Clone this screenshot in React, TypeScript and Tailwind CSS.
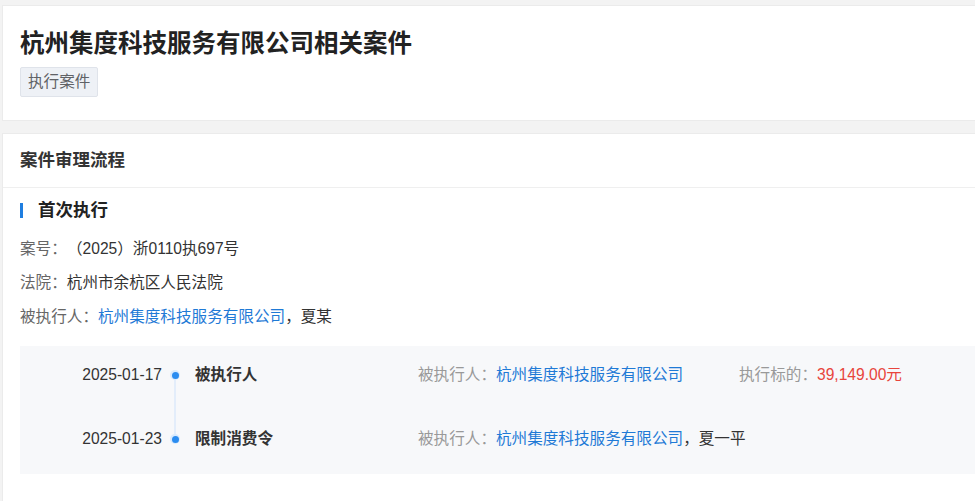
const font = "font-['Liberation_Sans','Noto_Sans_CJK_SC',sans-serif]";

const events = [
    {
        date: "2025-01-17",
        title: "被执行人",
        party: "杭州集度科技服务有限公司",
        extra: "",
        amount: "39,149.00元",
    },
    {
        date: "2025-01-23",
        title: "限制消费令",
        party: "杭州集度科技服务有限公司",
        extra: "，夏一平",
        amount: "",
    },
];

export default function App() {
    return (
        <div className={`${font} flex h-[501px] w-[975px] flex-col overflow-hidden bg-[#f3f3f3] pl-[2px] pt-[5px]`}>
            {/* Title card */}
            <div className="border border-r-0 border-[#ebebeb] bg-white pl-[17px] pt-[22px] pb-[23px]">
                <h1 className="text-[24.5px] font-bold leading-[32px] text-[#222]">
                    杭州集度科技服务有限公司相关案件
                </h1>
                <span className="mt-[7px] inline-flex h-[30px] items-center rounded-[2px] border border-[#dfe3ea] bg-[#eef1f6] px-[7px] text-[15.6px] text-[#606266]">
                    执行案件
                </span>
            </div>

            {/* Process card */}
            <div className="mt-[12px] flex-1 border border-r-0 border-b-0 border-[#ebebeb] bg-white">
                <div className="flex h-[54px] items-center border-b border-[#efefef] pl-[17px]">
                    <h2 className="text-[17.5px] font-bold text-[#333]">案件审理流程</h2>
                </div>

                <div className="pl-[17px] pt-[10px]">
                    <div className="flex h-[24px] items-center gap-[15px]">
                        <span className="h-[15px] w-[3px] bg-[#1f7ee0]" />
                        <h3 className="text-[17.5px] font-bold text-[#222]">首次执行</h3>
                    </div>

                    <div className="mt-[15px] flex flex-col gap-[10px] text-[15.6px] leading-[24px]">
                        <p>
                            <span className="text-[#666]">案号：</span>
                            <span className="ml-[8px] text-[#333]">（2025）浙0110执697号</span>
                        </p>
                        <p>
                            <span className="text-[#666]">法院：</span>
                            <span className="text-[#333]">杭州市余杭区人民法院</span>
                        </p>
                        <p>
                            <span className="text-[#666]">被执行人：</span>
                            <span className="text-[#1f7ad6]">杭州集度科技服务有限公司</span>
                            <span className="text-[#333]">，夏某</span>
                        </p>
                    </div>

                    {/* Timeline */}
                    <div className="mt-[17px] flex h-[128px] flex-col bg-[#f7f8fa]">
                        {events.map((ev, i) => (
                            <div
                                key={ev.date}
                                className={`flex items-center text-[15.6px] ${i === 0 ? "h-[58px]" : "h-[70px]"}`}
                            >
                                <span className="w-[142px] text-right text-[#333]">{ev.date}</span>
                                <div className="relative flex h-full w-[26px] items-center justify-center">
                                    {i === 0 && (
                                        <span className="absolute left-1/2 top-1/2 h-[64px] w-px -translate-x-1/2 bg-[#cfe2fa]" />
                                    )}
                                    <span className="relative h-[10px] w-[10px] rounded-full bg-[#d9eafd] p-[1.5px]">
                                        <span className="block h-full w-full rounded-full bg-[#2a8cf0]" />
                                    </span>
                                </div>
                                <span className="w-[230px] pl-[7px] font-bold text-[#333]">{ev.title}</span>
                                <div className="w-[321px] whitespace-nowrap">
                                    <span className="text-[#999]">被执行人：</span>
                                    <span className="text-[#1f7ad6]">{ev.party}</span>
                                    {ev.extra && <span className="text-[#333]">{ev.extra}</span>}
                                </div>
                                {ev.amount && (
                                    <div className="whitespace-nowrap">
                                        <span className="text-[#999]">执行标的：</span>
                                        <span className="text-[#e8453c]">{ev.amount}</span>
                                    </div>
                                )}
                            </div>
                        ))}
                    </div>
                </div>
            </div>
        </div>
    );
}
